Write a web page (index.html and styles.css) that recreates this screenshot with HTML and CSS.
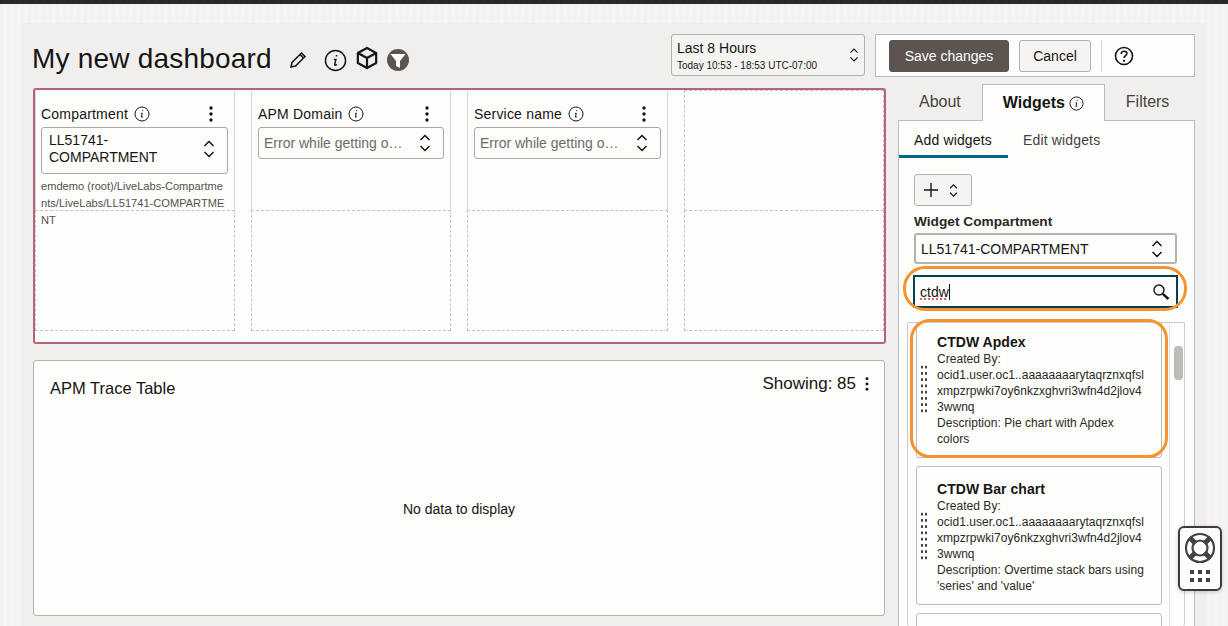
FILE: index.html
```html
<!DOCTYPE html>
<html>
<head>
  <meta charset="utf-8">
  <title>My new dashboard</title>
  <link rel="stylesheet" href="styles.css">
</head>
<body>
  <svg class="defs" width="0" height="0">
    <symbol id="i-info" viewBox="0 0 16 16">
      <circle cx="8" cy="8" r="7" fill="none" stroke="currentColor" stroke-width="1"/>
      <path d="M8.700 4.100v1.100M6.900 7.300H8.300L7.400 10.900c-.1.500.6.600 1.500-.2" fill="none" stroke="currentColor" stroke-width="1"/>
    </symbol>
    <symbol id="i-updown" viewBox="0 0 12 20">
      <path d="M1.500 7 6 2.500 10.500 7M1.500 13 6 17.500 10.500 13" fill="none" stroke="currentColor" stroke-width="1.500"/>
    </symbol>
    <symbol id="i-kebab" viewBox="0 0 4 16">
      <circle cx="2" cy="2" r="1.700"/><circle cx="2" cy="8" r="1.700"/><circle cx="2" cy="14" r="1.700"/>
    </symbol>
  </svg>

  <div class="topbar"></div>

  <div class="sheet">
    <header class="head">
      <h1 class="title">My new dashboard</h1>
      <svg class="pencil" width="18" height="18" viewBox="0 0 18 18"><path d="M2 16l1-4.500L12.500 2 16 5.500 6.500 15zM11 3.500 14.500 7" fill="none" stroke="#161513" stroke-width="1.500"/></svg>
      <svg class="icon-info-lg" width="23" height="23"><use href="#i-info"/></svg>
      <svg class="cube" width="22" height="24" viewBox="0 0 24 26"><path d="M12 2 22 7.500V18.500L12 24 2 18.500V7.500zM2 7.500 12 13 22 7.500M12 13V24" fill="none" stroke="#161513" stroke-width="2.400" stroke-linejoin="round"/></svg>
      <svg class="funnel" width="22" height="24" viewBox="0 0 22 24"><circle cx="11" cy="12" r="11" fill="#5c5450"/><path d="M3.500 6h15l-5.500 7v7l-4-2v-5z" fill="#fff"/></svg>
      <div class="time-select">
        <div>
          <div class="time-main">Last 8 Hours</div>
          <div class="time-sub">Today 10:53 - 18:53 UTC-07:00</div>
        </div>
        <svg class="updown" width="10" height="16"><use href="#i-updown"/></svg>
      </div>
      <div class="actions">
        <button class="btn btn-save">Save changes</button>
        <button class="btn btn-cancel">Cancel</button>
        <span class="divider"></span>
        <svg width="20" height="20" viewBox="0 0 20 20"><circle cx="10" cy="10" r="8.500" fill="none" stroke="#161513" stroke-width="1.600"/><path d="M7.200 8c0-1.800 1.300-2.800 2.900-2.800 1.600 0 2.800 1 2.800 2.400 0 2.200-2.900 2.100-2.900 4.400" fill="none" stroke="#161513" stroke-width="1.600"/><circle cx="10" cy="14.800" r="1.100" fill="#161513"/></svg>
      </div>
    </header>

    <div class="content">
      <main class="left">
        <section class="board">
          <div class="cell widget">
            <div class="widget-head">
              <span class="widget-label">Compartment</span>
              <svg class="info-sm" width="16" height="16"><use href="#i-info"/></svg>
              <svg class="kebab" width="4" height="16"><use href="#i-kebab"/></svg>
            </div>
            <div class="select select-tall">
              <span>LL51741-<br>COMPARTMENT</span>
              <svg class="updown" width="12" height="20"><use href="#i-updown"/></svg>
            </div>
            <div class="path">emdemo (root)/LiveLabs-Compartme<br>nts/LiveLabs/LL51741-COMPARTME<br>NT</div>
          </div>
          <div class="cell widget">
            <div class="widget-head">
              <span class="widget-label">APM Domain</span>
              <svg class="info-sm" width="16" height="16"><use href="#i-info"/></svg>
              <svg class="kebab" width="4" height="16"><use href="#i-kebab"/></svg>
            </div>
            <div class="select">
              <span class="placeholder">Error while getting o…</span>
              <svg class="updown" width="12" height="20"><use href="#i-updown"/></svg>
            </div>
          </div>
          <div class="cell widget">
            <div class="widget-head">
              <span class="widget-label">Service name</span>
              <svg class="info-sm" width="16" height="16"><use href="#i-info"/></svg>
              <svg class="kebab" width="4" height="16"><use href="#i-kebab"/></svg>
            </div>
            <div class="select">
              <span class="placeholder">Error while getting o…</span>
              <svg class="updown" width="12" height="20"><use href="#i-updown"/></svg>
            </div>
          </div>
          <div class="cell"></div>
          <div class="cell"></div>
          <div class="cell"></div>
          <div class="cell"></div>
          <div class="cell"></div>
        </section>

        <section class="trace">
          <div class="trace-head">
            <h2 class="trace-title">APM Trace Table</h2>
            <div class="trace-count">
              <span>Showing: 85</span>
              <svg class="kebab" width="4" height="14"><use href="#i-kebab"/></svg>
            </div>
          </div>
          <div class="trace-empty">No data to display</div>
        </section>
      </main>

      <aside class="side">
        <nav class="tabs">
          <span class="tab">About</span>
          <span class="tab tab-active">Widgets <svg class="info-tab" width="15" height="15"><use href="#i-info"/></svg></span>
          <span class="tab">Filters</span>
        </nav>
        <div class="panel">
          <div class="subtabs">
            <span class="subtab subtab-active">Add widgets</span>
            <span class="subtab">Edit widgets</span>
          </div>
          <div class="panel-body">
            <button class="add-btn">
              <svg width="16" height="16" viewBox="0 0 16 16"><path d="M8 1v14M1 8h14" stroke="#161513" stroke-width="1.400"/></svg>
              <svg width="9" height="15" class="updown"><use href="#i-updown"/></svg>
            </button>
            <label class="field-label">Widget Compartment</label>
            <div class="select select-wide">
              <span>LL51741-COMPARTMENT</span>
              <svg class="updown" width="12" height="20"><use href="#i-updown"/></svg>
            </div>
            <div class="search-wrap">
              <div class="search">
                <span class="search-text"><span class="misspelt">ctdw</span></span>
                <svg width="18" height="18" viewBox="0 0 18 18"><circle cx="7" cy="7" r="5" fill="none" stroke="#161513" stroke-width="1.400"/><path d="M10.800 10.800 16.500 16" stroke="#161513" stroke-width="2.400"/></svg>
              </div>
              <div class="ring ring-search"></div>
            </div>
            <div class="list-wrap">
              <div class="list">
                <div class="cards">
                  <article class="card card-first">
                    <span class="grip"></span>
                    <div class="card-text">
                      <h3 class="card-title">CTDW Apdex</h3>
                      Created By:<br>
                      ocid1.user.oc1..aaaaaaaarytaqrznxqfsl<br>
                      xmpzrpwki7oy6nkzxghvri3wfn4d2jlov4<br>
                      3wwnq<br>
                      Description: Pie chart with Apdex<br>
                      colors
                    </div>
                  </article>
                  <article class="card">
                    <span class="grip"></span>
                    <div class="card-text">
                      <h3 class="card-title">CTDW Bar chart</h3>
                      Created By:<br>
                      ocid1.user.oc1..aaaaaaaarytaqrznxqfsl<br>
                      xmpzrpwki7oy6nkzxghvri3wfn4d2jlov4<br>
                      3wwnq<br>
                      Description: Overtime stack bars using<br>
                      'series' and 'value'
                    </div>
                  </article>
                  <article class="card"></article>
                </div>
                <div class="scrollbar"><span class="thumb"></span></div>
              </div>
              <div class="ring ring-card"></div>
            </div>
          </div>
        </div>
      </aside>
    </div>
  </div>

  <div class="help-float">
    <svg width="32" height="32" viewBox="0 0 32 32">
      <path d="M5.500 5.500l6 6M26.500 5.500l-6 6M5.500 26.500l6-6M26.500 26.500l-6-6" stroke="#46423f" stroke-width="5"/>
      <circle cx="16" cy="16" r="14" fill="none" stroke="#46423f" stroke-width="2.200"/>
      <circle cx="16" cy="16" r="7.500" fill="none" stroke="#46423f" stroke-width="2.200"/>
    </svg>
    <span class="apps"></span>
  </div>
</body>
</html>
```

FILE: styles.css
```css
html, body {
  margin: 0;
  height: 626px;
  overflow: hidden;
}

body {
  position: relative;
  font-family: "Liberation Sans", Arial, sans-serif;
  color: #161513;
  background: #f6f5f3;
  background-image: repeating-linear-gradient(90deg, rgba(0, 0, 0, 0.012) 0 3px, transparent 3px 7px);
}

.defs {
  position: absolute;
}

.topbar {
  height: 4px;
  background: #2b2825;
}

.sheet {
  box-sizing: border-box;
  height: 603px;
  margin: 19px 21px 0 20px;
  padding: 11px 12px 0 13px;
  overflow: hidden;
  background: #f1efed;
}

/* header */
.head {
  display: flex;
  align-items: center;
  height: 45px;
  margin-bottom: 5px;
}

.title {
  margin: 4px 0 0 -1px;
  font-size: 28px;
  font-weight: normal;
  letter-spacing: 0.2px;
  white-space: nowrap;
}

.pencil {
  margin: 7px 0 0 17px;
}

.icon-info-lg {
  margin: 8px 0 0 17px;
}

.cube {
  margin: 3px 0 0 9px;
}

.funnel {
  margin: 7px 0 0 9px;
}

.time-select {
  display: flex;
  align-items: center;
  justify-content: space-between;
  align-self: flex-start;
  box-sizing: border-box;
  width: 194px;
  height: 42px;
  margin-left: auto;
  padding: 0 5px;
  background: #f5f4f2;
  border: 1px solid #b7aea6;
  border-radius: 3px;
}

.time-main {
  font-size: 14px;
  line-height: 20px;
}

.time-sub {
  font-size: 10px;
  line-height: 15px;
}

.updown {
  color: #161513;
  flex: none;
}

.actions {
  display: flex;
  align-items: center;
  align-self: flex-start;
  box-sizing: border-box;
  width: 320px;
  height: 43px;
  margin-left: 10px;
  padding: 0 13px;
  background: #fdfdfb;
  border: 1px solid #b3bcc8;
}

.btn {
  height: 32px;
  padding: 0;
  font-family: inherit;
  font-size: 14px;
  border-radius: 3px;
}

.btn-save {
  width: 120px;
  color: #fff;
  background: #5c5450;
  border: 1px solid #5c5450;
}

.btn-cancel {
  width: 72px;
  margin-left: 10px;
  color: #161513;
  background: #f5f4f2;
  border: 1px solid #b7aea6;
}

.divider {
  width: 1px;
  height: 30px;
  margin: 0 12px 0 10px;
  background: #d6d3d0;
}

/* columns */
.content {
  display: grid;
  grid-template-columns: 852px 297px;
  column-gap: 13px;
}

.left {
  padding-top: 4px;
}

.board {
  display: grid;
  grid-template-columns: 200px 200px 201px 200px;
  grid-template-rows: 120px 120px;
  column-gap: 16px;
  box-sizing: border-box;
  width: 853px;
  height: 256px;
  background: #fdfdfb;
  border: 2px solid #b5647a;
  border-radius: 3px;
}

.cell {
  box-sizing: border-box;
  border: 1px dashed #c4c4c4;
  margin-bottom: -1px;
}

.widget {
  padding: 14px 6px 0;
  border: 1px solid #cddae6;
  border-top-color: transparent;
  border-bottom: 1px dashed #c4c4c4;
}

.widget:first-child {
  padding-left: 5px;
}

.widget-head {
  display: flex;
  align-items: center;
  height: 18px;
  font-size: 14px;
}

.widget-label {
  letter-spacing: 0.2px;
}

.info-sm {
  margin-left: 6px;
}

.kebab {
  fill: #161513;
  margin-left: auto;
  margin-right: 15px;
}

.select {
  display: flex;
  align-items: center;
  justify-content: space-between;
  box-sizing: border-box;
  height: 32px;
  margin-top: 4px;
  padding: 0 12px 0 5px;
  font-size: 14px;
  background: #fdfdfb;
  border: 1px solid #b0a79f;
  border-radius: 3px;
}

.select-tall {
  height: 47px;
  padding: 0 12px 3px 7px;
  line-height: 17px;
}

.placeholder {
  color: #6f6a66;
}

.path {
  position: relative;
  margin-top: 4px;
  font-size: 11.100px;
  line-height: 17px;
  color: #55504c;
  white-space: nowrap;
}

.trace {
  position: relative;
  box-sizing: border-box;
  height: 256px;
  margin-top: 16px;
  background: #fdfdfb;
  border: 1px solid #b9b2ab;
  border-radius: 3px;
}

.trace-head {
  display: flex;
  justify-content: space-between;
  padding: 13px 0 0 16px;
}

.trace-title {
  margin: 5px 0 0;
  font-size: 16.500px;
  font-weight: normal;
}

.trace-count {
  display: flex;
  align-items: center;
  height: 20px;
  font-size: 17px;
}

.trace-count .kebab {
  margin-left: 9px;
  margin-right: 15px;
}

.trace-empty {
  padding-top: 103px;
  text-align: center;
  font-size: 14px;
}

/* widgets panel */
.tabs {
  display: flex;
  height: 36px;
}

.tab {
  display: flex;
  align-items: center;
  padding: 0 21px;
  font-size: 16px;
  color: #46423f;
}

.tab-active {
  position: relative;
  z-index: 1;
  box-sizing: border-box;
  width: 123px;
  height: 37px;
  padding: 0 0 0 20px;
  color: #161513;
  font-weight: bold;
  background: #fdfdfb;
  border: 1px solid #b3bcc8;
  border-bottom: 0;
}

.info-tab {
  margin-left: 4px;
  font-weight: normal;
}

.panel {
  box-sizing: border-box;
  height: 520px;
  background: #fdfdfb;
  border: 1px solid #b3bcc8;
}

.subtabs {
  display: flex;
  height: 37px;
}

.subtab {
  box-sizing: border-box;
  height: 37px;
  padding: 11px 15px 0;
  font-size: 14px;
  letter-spacing: 0.15px;
  color: #46423f;
}

.subtab-active {
  width: 109px;
  color: #161513;
  border-bottom: 3px solid #00688c;
}

.panel-body {
  padding: 16px 17px 0 15px;
}

.add-btn {
  display: flex;
  align-items: center;
  gap: 10px;
  box-sizing: border-box;
  width: 58px;
  height: 32px;
  padding: 0 0 0 8px;
  background: #f5f4f2;
  border: 1px solid #b7aea6;
  border-radius: 3px;
}

.field-label {
  display: block;
  margin-top: 6px;
  font-size: 13.700px;
  line-height: 20px;
  font-weight: bold;
  color: #2b2825;
}

.select-wide {
  width: 263px;
  height: 31px;
  margin-top: 1px;
  padding: 0 12px 0 5px;
  border-width: 2px;
  border-color: #b7b2ad;
}

.search-wrap {
  position: relative;
  margin: 11px 0 0 -1px;
}

.search {
  display: flex;
  align-items: center;
  justify-content: space-between;
  box-sizing: border-box;
  width: 265px;
  height: 33px;
  padding: 0 6px 0 5px;
  background: #fdfdfb;
  border: 2px solid #04404f;
}

.search-text {
  margin-top: 1px;
  font-size: 14px;
  border-right: 1px solid #161513;
}

.misspelt {
  text-decoration: underline dotted #ef5a68 2px;
  text-underline-offset: 1px;
}

.ring {
  position: absolute;
  box-sizing: border-box;
  border: 3px solid #f7932e;
  pointer-events: none;
}

.ring-search {
  top: -9px;
  left: -10px;
  width: 284px;
  height: 45px;
  border-radius: 22px;
}

.list-wrap {
  position: relative;
  margin: 14px 0 0 -7px;
}

.list {
  display: flex;
  box-sizing: border-box;
  width: 278px;
  height: 304px;
  overflow: hidden;
  background: #fdfdfb;
  border: 1px solid #cfccc8;
  border-bottom: 0;
  border-radius: 2px;
}

.cards {
  width: 262px;
  padding: 0 0 0 8px;
  box-sizing: border-box;
}

.card {
  display: flex;
  align-items: center;
  box-sizing: border-box;
  width: 246px;
  height: 139px;
  margin-bottom: 8px;
  background: #fdfdfb;
  border: 1px solid #c0bbb6;
  border-radius: 3px;
}

.card-first {
  margin-top: -4px;
}

.grip {
  flex: none;
  width: 8px;
  height: 50px;
  margin-left: 3px;
  background-image: radial-gradient(circle, #3f3a37 1px, transparent 1.300px);
  background-size: 4px 6.250px;
}

.card-text {
  margin-left: 9px;
  padding-top: 3px;
  font-size: 12px;
  line-height: 16px;
  letter-spacing: 0.04px;
  white-space: nowrap;
  color: #2b2825;
}

.card-title {
  margin: 0;
  font-size: 14px;
  line-height: 17px;
  font-weight: bold;
  color: #161513;
}

.scrollbar {
  flex: none;
  box-sizing: border-box;
  width: 15px;
  padding: 23px 0 0 4px;
  border-left: 1px solid #e4e2df;
}

.thumb {
  display: block;
  width: 9px;
  height: 34px;
  background: #bdbbb8;
  border-radius: 4px;
}

.ring-card {
  top: -3px;
  left: 3px;
  width: 258px;
  height: 139px;
  border-radius: 20px;
}

/* floating help */
.help-float {
  position: absolute;
  top: 526px;
  left: 1178px;
  display: flex;
  flex-direction: column;
  align-items: center;
  box-sizing: border-box;
  width: 44px;
  height: 65px;
  padding-top: 4px;
  background: #fdfdfb;
  border: 2px solid #3f3a37;
  border-radius: 6px;
  box-shadow: 0 1px 4px rgba(0, 0, 0, 0.2);
}

.apps {
  width: 20px;
  height: 12px;
  margin-top: 6px;
  background: repeating-linear-gradient(90deg, #46423f 0 4px, transparent 4px 8px);
  -webkit-mask: repeating-linear-gradient(#000 0 4px, transparent 4px 8px);
  mask: repeating-linear-gradient(#000 0 4px, transparent 4px 8px);
}
```
